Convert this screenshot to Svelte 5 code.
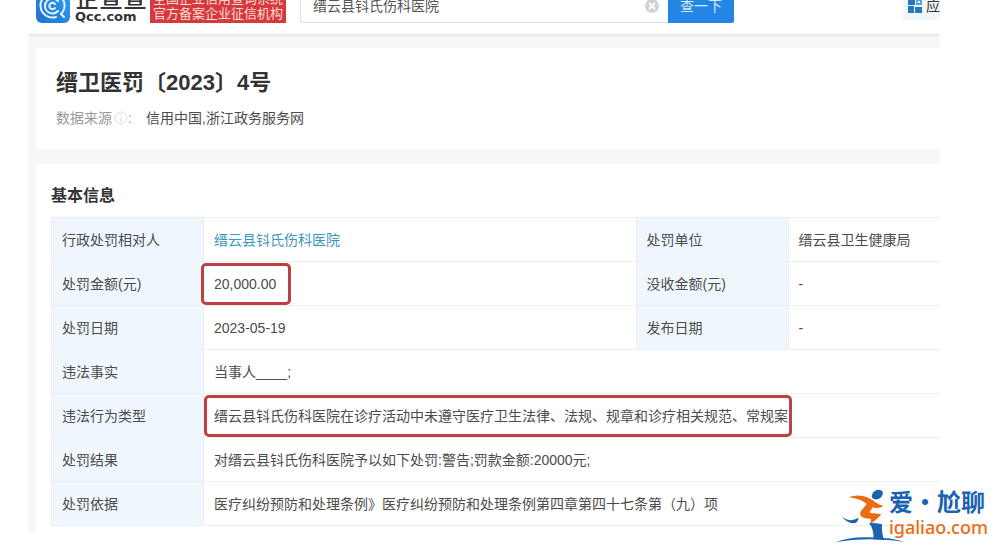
<!-- PenaltyDetail.svelte — Administrative penalty record with search header -->
<script lang="ts">
	interface Field {
		label: string;
		value: string;
		link?: boolean;
		mark?: 'short' | 'long';
	}

	let query = $state('缙云县钭氏伤科医院');

	const rows: Field[][] = [
		[
			{ label: '行政处罚相对人', value: '缙云县钭氏伤科医院', link: true },
			{ label: '处罚单位', value: '缙云县卫生健康局' }
		],
		[
			{ label: '处罚金额(元)', value: '20,000.00', mark: 'short' },
			{ label: '没收金额(元)', value: '-' }
		],
		[
			{ label: '处罚日期', value: '2023-05-19' },
			{ label: '发布日期', value: '-' }
		],
		[{ label: '违法事实', value: '当事人____;' }],
		[
			{
				label: '违法行为类型',
				value: '缙云县钭氏伤科医院在诊疗活动中未遵守医疗卫生法律、法规、规章和诊疗相关规范、常规案',
				mark: 'long'
			}
		],
		[{ label: '处罚结果', value: '对缙云县钭氏伤科医院予以如下处罚:警告;罚款金额:20000元;' }],
		[{ label: '处罚依据', value: '医疗纠纷预防和处理条例》医疗纠纷预防和处理条例第四章第四十七条第（九）项' }]
	];
</script>

<div class="page">
	<header class="topbar">
		<a class="logo" href="#home">
			<svg class="logo-icon" viewBox="0 0 34 34" aria-hidden="true">
				<defs>
					<linearGradient id="logo-bg" x1="0" y1="1" x2="1" y2="0">
						<stop offset="0" stop-color="#1f6fd0" />
						<stop offset="1" stop-color="#2fa4ee" />
					</linearGradient>
				</defs>
				<rect width="34" height="34" rx="6" fill="url(#logo-bg)" />
				<g fill="none" stroke="#e4f5ff" stroke-linecap="round">
					<path d="M20 28 A12 12 0 1 1 28 20 Q27 23 25 25 L28 28" stroke-width="2" />
					<path d="M22 22 A7.500 7.500 0 1 1 22 12" stroke-width="2" />
					<path d="M19 19 A3.200 3.200 0 1 1 19 15" stroke-width="2" />
				</g>
			</svg>
			<span class="logo-text">
				<span class="logo-name">企查查</span>
				<span class="logo-domain">Qcc.com</span>
			</span>
		</a>
		<p class="slogan">全国企业信用查询系统<br />官方备案企业征信机构</p>

		<form class="search" onsubmit={(e) => e.preventDefault()}>
			<div class="search-box">
				<input type="text" aria-label="搜索" bind:value={query} />
				<button class="clear" type="button" aria-label="清除" onclick={() => (query = '')}>
					<svg viewBox="0 0 16 16" aria-hidden="true">
						<circle cx="8" cy="8" r="7" fill="#d2d2d2" />
						<path d="M5 5 L11 11 M11 5 L5 11" stroke="#fff" stroke-width="2" />
					</svg>
				</button>
			</div>
			<button class="submit" type="submit">查一下</button>
		</form>

		<a class="apps" href="#apps">
			<svg viewBox="0 0 14 14" aria-hidden="true">
				<path d="M0 0h7v6H0z M0 7h6v7H0z M7 8h7v6H7z" fill="#2878b8" />
				<path d="M9 1h4v4H9z" fill="#fff" stroke="#55a5df" stroke-width="2" />
			</svg>
			<span>应用</span>
		</a>
	</header>

	<main>
		<section class="card summary">
			<h1>缙卫医罚〔2023〕4号</h1>
			<p class="source">
				<span class="source-label">数据来源</span>
				<svg viewBox="0 0 14 14" aria-hidden="true">
					<circle cx="7" cy="7" r="6" fill="none" stroke="#ddd" />
					<path d="M7 3v2 M7 6v5" stroke="#ddd" />
				</svg>
				<span class="colon">:</span>
				<span>信用中国,浙江政务服务网</span>
			</p>
		</section>

		<section class="card detail">
			<h2>基本信息</h2>
			<table>
				<colgroup>
					<col class="col-label" />
					<col />
					<col class="col-label" />
					<col class="col-label" />
				</colgroup>
				<tbody>
					{#each rows as fields}
						<tr>
							{#each fields as field}
								<th scope="row">{field.label}</th>
								<td colspan={fields.length === 1 ? 3 : 1}>
									{#if field.link}
										<a href="#company">{field.value}</a>
									{:else if field.mark}
										<span class="mark {field.mark}">{field.value}</span>
									{:else}
										{field.value}
									{/if}
								</td>
							{/each}
						</tr>
					{/each}
				</tbody>
			</table>
		</section>
	</main>
</div>

<!-- Site watermark, floats over the page corner -->
<div class="watermark">
	<svg viewBox="15 12 210 165" aria-hidden="true">
		<ellipse cx="142" cy="32" rx="18" ry="13" transform="rotate(-35 142 32)" fill="#1b62b0" />
		<path
			d="M56 40 Q78 31 102 37 Q124 44 136 55 Q148 64 161 65 Q147 75 128 70 L119 83 Q120 88 132 88 L154 91 Q145 103 121 121 Q124 110 122 104 Q106 105 95 98 Q87 91 93 81 L110 60 Q92 44 56 40Z"
			fill="#ee6a14"
		/>
		<path d="M33 94 Q44 108 62 109 Q74 108 86 101 Q84 115 72 118 Q50 119 33 94Z" fill="#1b62b0" />
		<path d="M117 117 Q138 116 156 121 Q154 143 162 168 L130 166 Q133 137 117 117Z" fill="#1b62b0" />
		<path d="M18 174 Q58 158 118 160 Q188 161 223 174 Q178 166 116 166 Q64 166 18 174Z" fill="#1b62b0" />
	</svg>
	<div class="watermark-text">
		<span class="watermark-name">爱·尬聊</span>
		<span class="watermark-domain">igaliao.com</span>
	</div>
</div>

<style>
	:global(body) {
		margin: 0;
		background: #fff;
		color: #4c4c4c;
		font-family: 'Liberation Sans', 'Noto Sans CJK SC', sans-serif;
		font-size: 14px;
		line-height: 20px;
	}

	h1,
	h2,
	p {
		margin: 0;
	}

	a {
		text-decoration: none;
	}

	svg {
		display: block;
		flex: none;
	}

	.page {
		margin: 0 60px 0 28px;
		overflow: hidden;
		background: #f7f7f7;
	}

	.topbar {
		display: flex;
		align-items: flex-end;
		box-sizing: border-box;
		height: 34px;
		padding: 0 0 11px 8px;
		background: #fff;
		box-shadow: 0 1px 3px rgba(0, 0, 0, 0.12);
	}

	.logo {
		display: flex;
		flex: none;
		align-items: flex-end;
		gap: 5px;
		width: 114px;
		color: #333;
	}

	.logo-icon {
		width: 34px;
		height: 34px;
	}

	.logo-text {
		display: flex;
		flex-direction: column;
	}

	.logo-name {
		font-size: 24px;
		line-height: 24px;
		font-weight: 500;
	}

	.logo-domain {
		font-family: 'DejaVu Sans', sans-serif;
		font-size: 13px;
		line-height: 12px;
		font-weight: bold;
	}

	.slogan {
		flex: none;
		padding: 2px 3px;
		background: #d63a3c;
		color: #fbdcd8;
		font-size: 13px;
		line-height: 15px;
	}

	.search {
		display: flex;
		flex: 1;
		margin: 0 169px 0 14px;
	}

	.search-box {
		display: flex;
		flex: 1;
		align-items: center;
		box-sizing: border-box;
		height: 34px;
		padding: 0 8px 0 12px;
		border: 1px solid #ddd;
		border-right: 0;
		border-radius: 3px 0 0 3px;
	}

	.search-box input {
		flex: 1;
		min-width: 0;
		padding: 0;
		border: 0;
		outline: 0;
		background: none;
		color: #555;
		font: inherit;
	}

	.clear {
		padding: 0;
		border: 0;
		background: none;
	}

	.clear svg {
		width: 16px;
		height: 16px;
	}

	.submit {
		width: 66px;
		height: 34px;
		padding: 0;
		border: 0;
		border-radius: 0 2px 2px 0;
		background: #2486e4;
		color: #d5ecff;
		font: inherit;
	}

	.apps {
		display: flex;
		flex: none;
		align-items: center;
		gap: 4px;
		width: 32px;
		height: 28px;
		margin-bottom: 3px;
		padding-left: 5px;
		background: #f0f7fc;
		color: #333;
		white-space: nowrap;
	}

	.apps svg {
		width: 14px;
		height: 14px;
	}

	main {
		display: flex;
		flex-direction: column;
		gap: 15px;
		padding: 14px 0 0 8px;
	}

	.card {
		background: #fff;
	}

	.summary {
		padding: 20px 20px 21px;
	}

	h1 {
		color: #333;
		font-size: 22px;
		line-height: 30px;
	}

	.source {
		display: flex;
		align-items: center;
		margin-top: 10px;
	}

	.source svg {
		width: 14px;
		height: 14px;
		margin-left: 2px;
	}

	.source-label,
	.colon {
		color: #999;
	}

	.colon {
		width: 18px;
	}

	.detail {
		padding: 22px 0 7px 15px;
	}

	h2 {
		color: #333;
		font-size: 16px;
		line-height: 20px;
	}

	table {
		width: 100%;
		margin-top: 11px;
		border-collapse: collapse;
		table-layout: fixed;
	}

	.col-label {
		width: 152px;
	}

	th,
	td {
		box-sizing: border-box;
		height: 44px;
		padding: 0 10px;
		border: 1px solid #e9eff2;
		border-right: 0;
		font-weight: normal;
		text-align: left;
		white-space: nowrap;
	}

	th {
		background: #eff7fc;
	}

	td a {
		color: #3a98bd;
	}

	/* Red frame drawn round a value without moving its text */
	.mark {
		display: inline-block;
		margin: -12px 0;
		border: 3px solid #bd4045;
		border-radius: 5px;
	}

	.mark.short {
		margin-left: -13px;
		padding: 8px 12px 8px 10px;
	}

	.mark.long {
		margin-left: -10px;
		padding: 8px 1px 8px 7px;
	}

	.watermark {
		position: absolute;
		right: 12px;
		bottom: 11px;
		display: flex;
		align-items: flex-start;
	}

	.watermark svg {
		width: 70px;
		height: 55px;
		margin-right: -16px;
	}

	.watermark-text {
		display: flex;
		flex-direction: column;
		z-index: 1;
	}

	.watermark-name {
		color: #1b62b0;
		font-family: 'Noto Sans CJK SC', sans-serif;
		font-size: 24px;
		line-height: 26px;
		font-weight: bold;
	}

	.watermark-domain {
		color: #ee6a14;
		font-family: 'Noto Sans', sans-serif;
		font-size: 18px;
		line-height: 26px;
		font-weight: 500;
	}
</style>
